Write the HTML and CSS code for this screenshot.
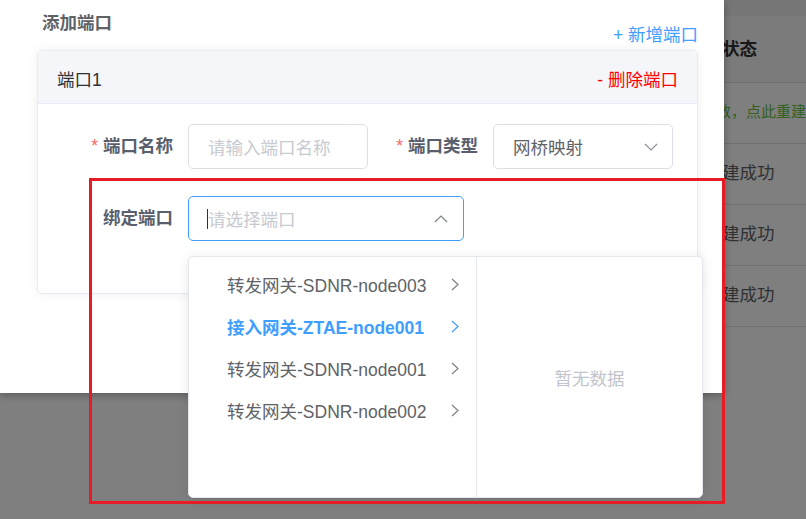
FILE: index.html
```html
<!DOCTYPE html>
<html lang="zh-CN">
<head>
    <meta charset="UTF-8">
    <meta name="viewport" content="width=device-width, initial-scale=1.0">
    <title>添加端口</title>
    <link rel="stylesheet" href="styles.css">
</head>
<body>

    <!-- underlying list page -->
    <div class="page">
        <div class="topbar"></div>
        <div class="table">
            <div class="tr th"><div></div><div class="td">状态</div></div>
            <div class="tr"><div></div><div class="td td-warn">数，点此重建</div></div>
            <div class="tr"><div></div><div class="td">建成功</div></div>
            <div class="tr"><div></div><div class="td">建成功</div></div>
            <div class="tr"><div></div><div class="td">建成功</div></div>
        </div>
    </div>

    <div class="mask"></div>

    <!-- dialog -->
    <div class="dialog">
        <div class="dialog-head">
            <span class="dialog-title">添加端口</span>
            <a class="link-add">+ 新增端口</a>
        </div>

        <div class="port-card">
            <div class="port-head">
                <span>端口1</span>
                <a class="link-del">- 删除端口</a>
            </div>
            <div class="port-body">
                <div class="form-row">
                    <div class="form-item">
                        <label class="form-label is-required">端口名称</label>
                        <div class="input"><span class="placeholder">请输入端口名称</span></div>
                    </div>
                    <div class="form-item">
                        <label class="form-label is-required">端口类型</label>
                        <div class="input">
                            <span class="value">网桥映射</span>
                            <svg class="arrow arrow-down" width="14" height="8" viewBox="0 0 14 8"><polyline points="1,1 7,7 13,1" fill="none" stroke="#8e9199" stroke-width="1.2"/></svg>
                        </div>
                    </div>
                </div>
                <div class="form-row">
                    <div class="form-item">
                        <label class="form-label">绑定端口</label>
                        <div class="cascader">
                            <div class="input input-wide is-focus">
                                <span class="caret"></span><span class="placeholder">请选择端口</span>
                                <svg class="arrow arrow-up" width="14" height="8" viewBox="0 0 14 8"><polyline points="1,7 7,1 13,7" fill="none" stroke="#7d818a" stroke-width="1.2"/></svg>
                            </div>

                            <div class="cascader-panel">
                                <ul class="cascader-menu">
                                    <li class="cascader-node">转发网关-SDNR-node003<svg width="8" height="13" viewBox="0 0 8 13"><polyline points="1,1 7,6.5 1,12" fill="none" stroke="currentColor" stroke-width="1.2"/></svg></li>
                                    <li class="cascader-node is-active">接入网关-ZTAE-node001<svg width="8" height="13" viewBox="0 0 8 13"><polyline points="1,1 7,6.5 1,12" fill="none" stroke="currentColor" stroke-width="1.2"/></svg></li>
                                    <li class="cascader-node">转发网关-SDNR-node001<svg width="8" height="13" viewBox="0 0 8 13"><polyline points="1,1 7,6.5 1,12" fill="none" stroke="currentColor" stroke-width="1.2"/></svg></li>
                                    <li class="cascader-node">转发网关-SDNR-node002<svg width="8" height="13" viewBox="0 0 8 13"><polyline points="1,1 7,6.5 1,12" fill="none" stroke="currentColor" stroke-width="1.2"/></svg></li>
                                </ul>
                                <div class="cascader-empty">暂无数据</div>
                            </div>
                        </div>
                    </div>
                </div>
            </div>
        </div>
    </div>

    <!-- red highlight box -->
    <div class="annotation"></div>

</body>
</html>
```

FILE: styles.css
```css
* {
    box-sizing: border-box;
}

body {
    margin: 0;
    width: 806px;
    height: 519px;
    overflow: hidden;
    position: relative;
    background: #fff;
    font-family: "Liberation Sans", "Noto Sans CJK SC", sans-serif;
    font-size: 17.5px;
    color: #606266;
}

/* underlying page */
.topbar {
    height: 16px;
    background: #ececec;
}

.tr {
    display: grid;
    grid-template-columns: 704px 1fr;
    height: 61px;
    align-items: center;
    border-bottom: 1px solid #dcdfe6;
    white-space: nowrap;
}

.th {
    height: 67px;
    background: #f7f7f7;
    font-weight: bold;
    color: #303133;
}

.td {
    padding-left: 18px;
    margin-top: -6px;
}

.th .td {
    margin-top: -3px;
}

.td-warn {
    padding-left: 12px;
    font-size: 15px;
    color: #67c23a;
}

.mask {
    position: absolute;
    inset: 0;
    background: rgba(0, 0, 0, 0.5);
}

/* dialog */
.dialog {
    position: absolute;
    left: 0;
    top: 0;
    width: 724px;
    height: 393px;
    background: #fff;
    padding: 10px 26px 0 37px;
    box-shadow: 0 2px 8px rgba(0, 0, 0, 0.3);
}

.dialog-head {
    display: flex;
    justify-content: space-between;
    height: 36px;
    padding-left: 5px;
}

.dialog-title {
    align-self: flex-start;
    line-height: 26px;
    font-weight: bold;
    color: #606266;
}

.link-add {
    align-self: flex-end;
    line-height: 22px;
    color: #409eff;
}

.port-card {
    margin-top: 4px;
    border: 1px solid #e6ebf5;
    border-radius: 5px;
    box-shadow: 0 0 12px rgba(0, 0, 0, 0.06);
}

.port-head {
    height: 53px;
    display: flex;
    align-items: center;
    justify-content: space-between;
    padding: 3px 19px 0;
    background: #f5f6fa;
    border-bottom: 1px solid #e6ebf5;
    border-radius: 5px 5px 0 0;
    color: #303133;
}

.link-del {
    color: #f00;
}

.port-body {
    padding: 20px 25px 52px;
}

.form-row {
    display: flex;
}

.form-row + .form-row {
    margin-top: 27px;
}

.form-item {
    display: flex;
}

.form-label {
    width: 125px;
    padding-right: 15px;
    text-align: right;
    line-height: 45px;
    font-weight: bold;
    color: #5a5f6e;
}

.form-label.is-required::before {
    content: "*";
    color: #f56c6c;
    margin-right: 5px;
    font-weight: normal;
}

.input {
    width: 180px;
    height: 45px;
    display: flex;
    align-items: center;
    padding: 0 14px 0 19px;
    border: 1px solid #dcdfe6;
    border-radius: 5px;
    background: #fff;
}

.input-wide {
    width: 276px;
    padding-right: 15px;
}

.input.is-focus {
    border-color: #409eff;
}

.placeholder {
    color: #c7cad1;
}

.value {
    color: #606266;
}

.caret {
    width: 1px;
    height: 20px;
    background: #303133;
    margin-left: -1px;
}

.arrow {
    margin-left: auto;
}

/* cascader dropdown */
.cascader {
    position: relative;
}

.cascader-panel {
    position: absolute;
    left: 0;
    top: 60px;
    width: 515px;
    height: 242px;
    display: flex;
    background: #fff;
    border: 1px solid #e4e7ed;
    border-radius: 5px;
    box-shadow: 0 2px 12px rgba(0, 0, 0, 0.1);
    z-index: 2;
}

.cascader-menu {
    list-style: none;
    margin: 0;
    width: 288px;
    padding: 6px 0;
    border-right: 1px solid #e4e7ed;
}

.cascader-node {
    height: 42px;
    display: flex;
    align-items: center;
    justify-content: space-between;
    padding: 0 17px 0 38px;
    color: #606266;
    white-space: nowrap;
}

.cascader-node svg {
    color: #7d8088;
}

.cascader-node.is-active {
    color: #409eff;
    font-weight: bold;
}

.cascader-node.is-active svg {
    color: #409eff;
}

.cascader-empty {
    flex: 1;
    display: flex;
    align-items: center;
    justify-content: center;
    color: #c0c4cc;
}

/* highlight box */
.annotation {
    position: absolute;
    left: 89px;
    top: 178px;
    width: 636px;
    height: 326px;
    border: 3px solid #e81c24;
    z-index: 5;
}
```
